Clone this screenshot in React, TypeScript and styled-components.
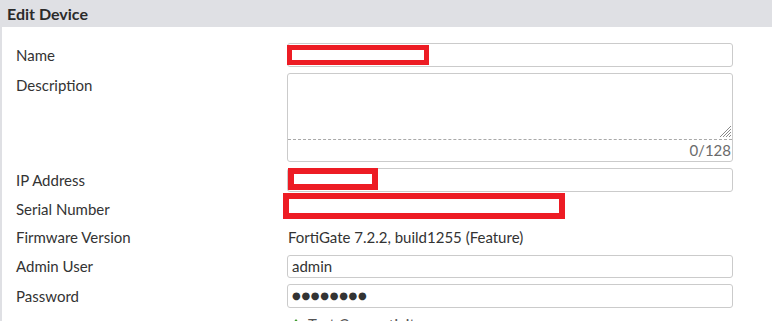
import React from 'react';
import styled, { createGlobalStyle } from 'styled-components';

const GlobalStyle = createGlobalStyle`
    html, body {
        margin: 0;
        padding: 0;
        background: #ffffff;
    }
    body {
        font-family: Lato, "Open Sans", sans-serif;
        font-size: 15px;
        color: #333333;
        height: 321px;
        overflow: hidden;
    }
`;

export default function App() {
    return (
        <>
            <GlobalStyle />
            <Header>Edit Device</Header>
            <Body>
                <Row>
                    <Label>Name</Label>
                    <Field>
                        <TextBox />
                        <Redact $x={0} $y={2} $w={142} $h={20} $t={5} />
                    </Field>
                </Row>
                <Row>
                    <Label>Description</Label>
                    <Field>
                        <AreaBox>
                            <AreaEdit>
                                <ResizeGrip viewBox="0 0 12 12">
                                    <line x1="12" y1="1" x2="1" y2="12" />
                                    <line x1="12" y1="4" x2="4" y2="12" />
                                    <line x1="12" y1="7" x2="7" y2="12" />
                                    <line x1="12" y1="10" x2="10" y2="12" />
                                </ResizeGrip>
                            </AreaEdit>
                            <Counter>0/128</Counter>
                        </AreaBox>
                    </Field>
                </Row>
                <Row>
                    <Label>IP Address</Label>
                    <Field>
                        <TextBox />
                        <Redact $x={1} $y={0} $w={90} $h={22} $t={6} />
                    </Field>
                </Row>
                <Row>
                    <Label $h={22}>Serial Number</Label>
                    <Field>
                        <Value $h={22} />
                        <Redact $x={-4} $y={-5} $w={282} $h={26} $t={6} />
                    </Field>
                </Row>
                <Row>
                    <Label $h={23}>Firmware Version</Label>
                    <Field>
                        <Value $h={23}>FortiGate 7.2.2, build1255 (Feature)</Value>
                    </Field>
                </Row>
                <Row>
                    <Label $h={23}>Admin User</Label>
                    <Field>
                        <TextBox $h={23}>admin</TextBox>
                    </Field>
                </Row>
                <Row>
                    <Label>Password</Label>
                    <Field>
                        <TextBox><Dots>●●●●●●●●</Dots></TextBox>
                    </Field>
                </Row>
                <Row>
                    <Label />
                    <Field>
                        <Hint>
                            <svg width="8" height="10" viewBox="0 0 8 10">
                                <path d="M4 0 L8 5 L5.5 5 L5.5 10 L2.5 10 L2.5 5 L0 5 Z" fill="#3f9b2e" />
                            </svg>
                            <span>Test Connectivity</span>
                        </Hint>
                    </Field>
                </Row>
            </Body>
        </>
    );
}

const Header = styled.div`
    height: 27px;
    background: #dfe0e4;
    display: flex;
    align-items: center;
    padding: 0 7px;
    font-weight: bold;
    font-size: 16px;
    color: #2b2b2b;
`;

const Body = styled.div`
    border-left: 2px solid #dfe0e4;
    padding: 16px 39px 0 14px;
`;

const Row = styled.div`
    display: flex;
    align-items: flex-start;
    margin-bottom: 6px;
`;

const Label = styled.div<{ $h?: number }>`
    width: 271px;
    flex-shrink: 0;
    line-height: ${p => p.$h ?? 24}px;
    color: #333333;
`;

const Field = styled.div`
    flex: 1;
    position: relative;
`;

const TextBox = styled.div<{ $h?: number }>`
    height: ${p => (p.$h ?? 24) - 2}px;
    line-height: ${p => (p.$h ?? 24) - 2}px;
    border: 1px solid #cbcbcb;
    border-radius: 3px;
    padding: 0 4px;
    color: #333333;
`;

const Value = styled.div<{ $h: number }>`
    height: ${p => p.$h}px;
    line-height: ${p => p.$h}px;
    padding-left: 1px;
    color: #333333;
`;

const Dots = styled.span`
    font-family: "DejaVu Sans", sans-serif;
    font-size: 10px;
    letter-spacing: 0.7px;
    vertical-align: top;
`;

const AreaBox = styled.div`
    height: 87px;
    border: 1px solid #cbcbcb;
    border-radius: 3px;
    display: flex;
    flex-direction: column;
`;

const AreaEdit = styled.div`
    position: relative;
    height: 65px;
    border-bottom: 1px dashed #a9a9a9;
`;

const ResizeGrip = styled.svg`
    position: absolute;
    right: 1px;
    bottom: 2px;
    width: 12px;
    height: 12px;
    stroke: #8a8a8a;
    stroke-width: 1;
`;

const Counter = styled.div`
    text-align: right;
    line-height: 21px;
    color: #6b6b6b;
    padding-right: 1px;
`;

const Redact = styled.div<{ $x: number; $y: number; $w: number; $h: number; $t: number }>`
    position: absolute;
    left: ${p => p.$x}px;
    top: ${p => p.$y}px;
    width: ${p => p.$w}px;
    height: ${p => p.$h}px;
    border: ${p => p.$t}px solid #ed1c24;
    background: #ffffff;
    box-sizing: border-box;
`;

const Hint = styled.div`
    display: flex;
    align-items: flex-start;
    gap: 8px;
    padding: 0 0 0 5px;
    color: #555555;
    line-height: 20px;
    svg {
        margin-top: 5px;
    }
`;
